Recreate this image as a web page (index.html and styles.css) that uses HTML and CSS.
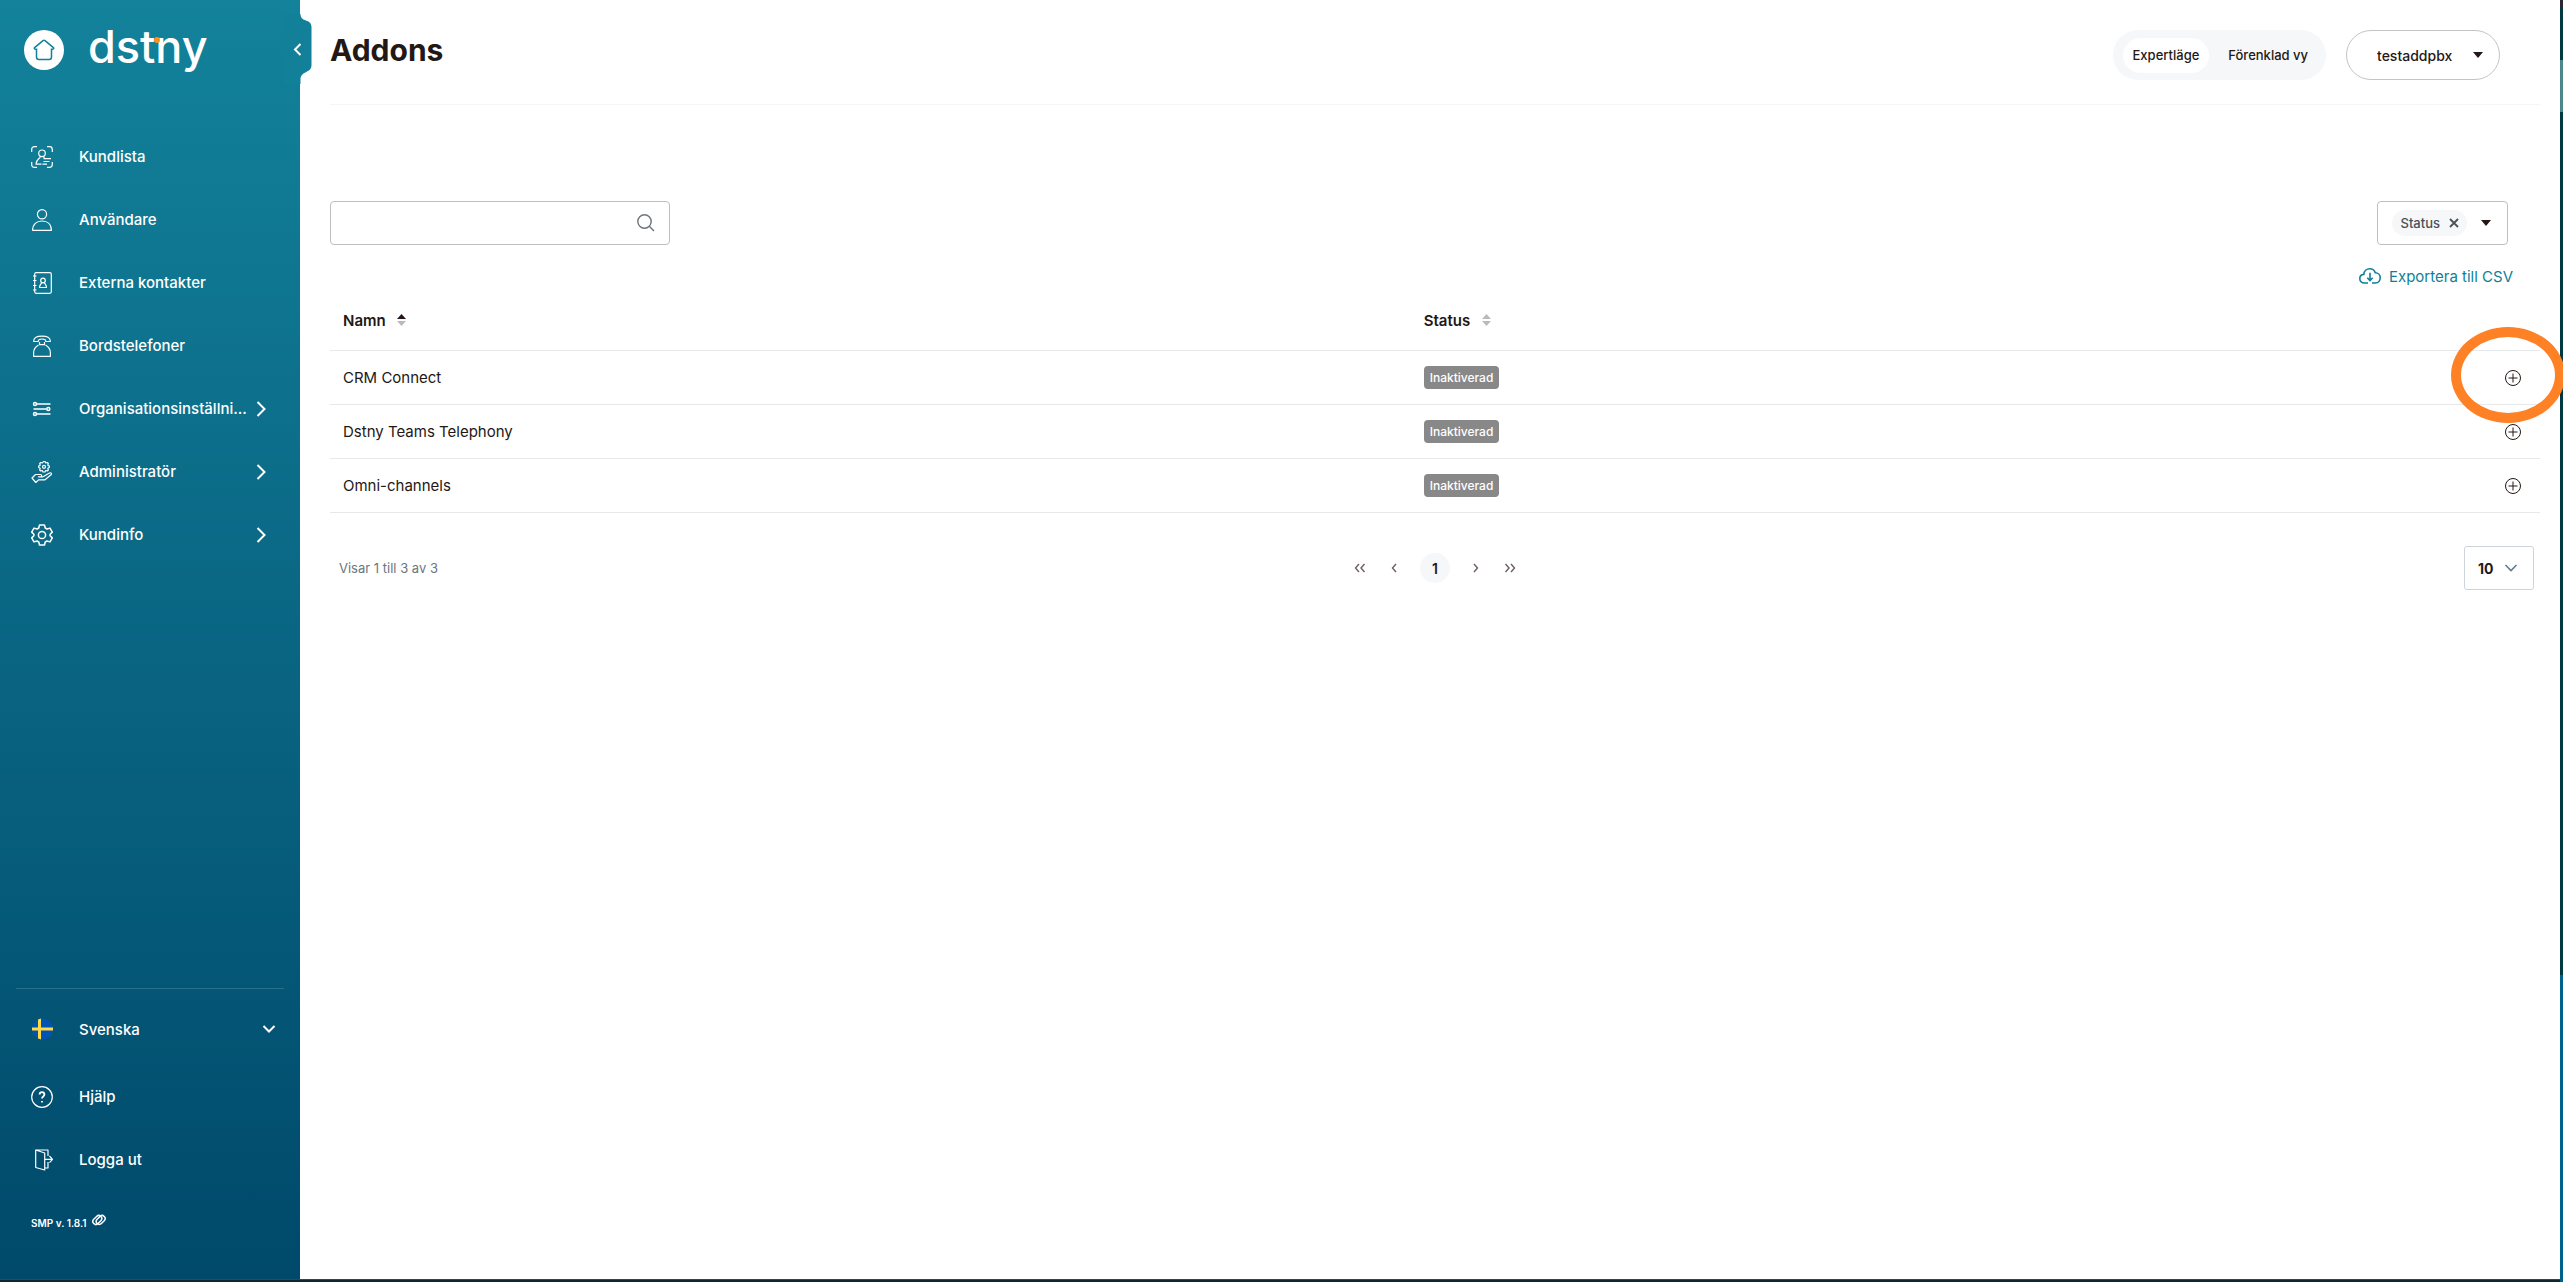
FILE: index.html
```html
<!DOCTYPE html>
<html lang="sv">

<head>
  <meta charset="UTF-8">
  <meta name="viewport" content="width=device-width, initial-scale=1.0">
  <title>Addons</title>
  <link rel="stylesheet" href="styles.css">
</head>

<body>
  <div class="app">
    <aside class="sidebar">
      <div class="brand">
        <a class="home" href="#" aria-label="Hem">
          <svg width="22" height="22" viewBox="0 0 22 22"><path d="M3.5 10.2H2.2c-.9 0-1.2-1-.6-1.6L10 1.600c.6-.5 1.400-.5 2 0l8.400 7c.6.6.3 1.600-.6 1.600h-1.300V18c0 1.500-.8 2.500-2.300 2.500H5.800C4.300 20.500 3.500 19.500 3.500 18z"/></svg>
        </a>
        <span class="logo">dstny</span>
      </div>
      <button class="collapse" aria-label="Dölj meny">
        <svg width="28" height="70" viewBox="0 0 28 70">
          <path class="tab" d="M0 0h16.500c0 9 11 4 11 13v38c0 9-11 5-11 15v4H0z"/>
          <path class="arrow" d="M16.500 30l-5.500 5.500 5.500 5.500"/>
        </svg>
      </button>

      <nav class="nav">
        <a class="nav-item" href="#">
          <svg class="icon" viewBox="0 0 22 22"><path d="M.7 6V3.500C.7 1.700 1.700.7 3.500.7H6M16 .7h2.500c1.800 0 2.800 1 2.800 2.800V6M21.300 16v2.500c0 1.800-1 2.800-2.800 2.800H16M6 21.300H3.500c-1.800 0-2.800-1-2.800-2.800V16"/><circle cx="11" cy="7.300" r="3.300"/><path d="M9.300 10.500c0 2-4.300 2.500-4.300 7.700h5.500M12.700 10.500c0 1 .5 1.500 1 1.700M12.500 12.700h7.500M12.500 15.500h6M11.500 18.200h4.500"/></svg>
          <span>Kundlista</span>
        </a>
        <a class="nav-item" href="#">
          <svg class="icon" viewBox="0 0 22 22"><circle cx="11" cy="5.300" r="4.600"/><path d="M1.600 21.300c0-6 4-9.300 9.400-9.300s9.400 3.300 9.400 9.300z"/></svg>
          <span>Användare</span>
        </a>
        <a class="nav-item" href="#">
          <svg class="icon" viewBox="0 0 22 22"><rect x="3.700" y=".7" width="16.600" height="20.600" rx="1.500"/><path d="M2 4h3.500M2 8.500h3.500M2 13.500h3.500M2 18h3.500"/><circle cx="12" cy="8.500" r="2.300"/><path d="M10.500 10.500c0 1.500-2 1.800-2 5h7c0-3.200-2-3.500-2-5"/></svg>
          <span>Externa kontakter</span>
        </a>
        <a class="nav-item" href="#">
          <svg class="icon" viewBox="0 0 22 22"><path d="M2.700 6.500C2.500 2.500 6 1.200 11 1.200s8.500 1.300 8.300 5.300h-4.500c0-1.500-.5-2.500-3.800-2.500s-3.800 1-3.800 2.500z"/><path d="M8.500 7v2.700h5V7M7.500 10C4 12 2.600 14.500 2.600 18v3.300h16.800V18c0-3.500-1.400-6-4.900-8"/></svg>
          <span>Bordstelefoner</span>
        </a>
        <a class="nav-item" href="#">
          <svg class="icon bold" viewBox="0 0 22 22"><circle cx="4" cy="6" r="1.500"/><path d="M6 6h13.500M2.500 11h12.800M6 16h13.500"/><circle cx="17.300" cy="11" r="1.500"/><circle cx="4" cy="16" r="1.500"/></svg>
          <span>Organisationsinställni...</span>
          <svg class="chevron" width="10" height="16" viewBox="0 0 10 16"><path d="M1.500 1l7 7-7 7"/></svg>
        </a>
        <a class="nav-item" href="#">
          <svg class="icon" viewBox="0 0 22 22"><path d="M12 1l1-.5h1l.7 1.500 1.600-.5 1 1-.5 1.700 1.500.8v1.500l-1.500.8.5 1.700-1 1-1.600-.5-.7 1.500h-2l-.7-1.500-1.600.5-1-1 .5-1.700L7.700 6.500V5l1.500-.8-.5-1.700 1-1 1.600.5z"/><circle cx="13" cy="5.800" r="1.500"/><path d="M1 17l3.500-3.500h5c1.500 0 1.500 2.300 0 2.300H7.500 12l6.500-3.800c1.500-.8 2.500.8 1.500 1.800l-6 5H7.500L4.800 21.500z"/></svg>
          <span>Administratör</span>
          <svg class="chevron" width="10" height="16" viewBox="0 0 10 16"><path d="M1.500 1l7 7-7 7"/></svg>
        </a>
        <a class="nav-item" href="#">
          <svg class="icon bold" viewBox="0 0 22 22"><path d="M8.500 1h5l.7 3 1.800 1 3-.9 2.300 4-2.200 2.200v1.400l2.200 2.200-2.300 4-3-.9-1.800 1-.7 3h-5l-.7-3-1.800-1-3 .9-2.300-4 2.200-2.200v-1.400L.7 8.100l2.300-4 3 .9 1.800-1z"/><circle cx="11" cy="11" r="3.600"/></svg>
          <span>Kundinfo</span>
          <svg class="chevron" width="10" height="16" viewBox="0 0 10 16"><path d="M1.500 1l7 7-7 7"/></svg>
        </a>
      </nav>

      <div class="nav-bottom">
        <label class="nav-item language">
          <svg class="icon flag" viewBox="0 0 22 22">
            <circle cx="11.500" cy="11" r="10.500" fill="#0052b4"/>
            <path fill="#ffda44" d="M7 1.500l3-.9v8.900h12v3H10v8.900l-3-.9v-8H1v-3h6z"/>
          </svg>
          <select aria-label="Språk">
            <option>Svenska</option>
          </select>
          <svg class="chevron" width="14" height="10" viewBox="0 0 14 10"><path d="M1.500 2L7 7.500 12.500 2"/></svg>
        </label>
        <a class="nav-item" href="#">
          <svg class="icon" viewBox="0 0 22 22"><circle cx="11" cy="11" r="10.300"/><path class="thick" d="M8.600 8.600c0-3.300 4.800-3.300 4.800 0 0 2-2.400 1.800-2.400 4M11 15v1.600"/></svg>
          <span>Hjälp</span>
        </a>
        <a class="nav-item" href="#">
          <svg class="icon" viewBox="0 0 22 22"><path d="M4.700 1H17v6M17 13v6h-3.500M4.700 1v17.500l9 2.500V4z M13.700 10.300H21M18.500 7l3 3.300-3 3.300"/></svg>
          <span>Logga ut</span>
        </a>
        <div class="version">
          <span>SMP v. 1.8.1</span>
          <svg width="16" height="12" viewBox="0 0 16 12"><rect x="1.300" y="3" width="10" height="6" rx="3" transform="rotate(-45 6.300 6)"/><rect x="4.700" y="3" width="10" height="6" rx="3" transform="rotate(-45 9.700 6)"/></svg>
        </div>
      </div>
    </aside>

    <main class="main">
      <header class="topbar">
        <h1>Addons</h1>
        <div class="view-toggle">
          <button class="active">Expertläge</button>
          <button>Förenklad vy</button>
        </div>
        <div class="account">
          <select aria-label="Konto">
            <option>testaddpbx</option>
          </select>
          <span class="caret"></span>
        </div>
      </header>

      <div class="toolbar">
        <div class="search">
          <input type="text" aria-label="Sök">
          <svg width="18" height="18" viewBox="0 0 18 18"><circle cx="7.500" cy="7.500" r="6.700"/><path d="M12.300 12.300l4.700 4.700"/></svg>
        </div>
        <div class="filter">
          <span class="chip">Status
            <button aria-label="Ta bort Status"><svg width="10" height="10" viewBox="0 0 10 10"><path d="M1 1l8 8M9 1L1 9"/></svg></button>
          </span>
          <button class="filter-open" aria-label="Välj filter"><span class="caret"></span></button>
        </div>
      </div>

      <div class="export">
        <a href="#">
          <svg width="22" height="16" viewBox="0 0 22 16"><path d="M9 15H5.500C2.500 15 .8 13 .8 10.600c0-2.300 1.700-4 4-4.200C5 3 7.500.8 10.800.8c2.700 0 4.700 1.500 5.500 4 3 0 4.900 2.300 4.900 5 0 3-2 5.200-4.700 5.200H13M11 4.800v7.700M8.300 9.800l2.700 2.900 2.700-2.900"/></svg>
          Exportera till CSV
        </a>
      </div>

      <table class="addons">
        <thead>
          <tr>
            <th class="col-name">Namn <svg class="sort asc" width="9" height="12" viewBox="0 0 9 12"><path class="up" d="M0 5l4.500-5L9 5z"/><path d="M0 7h9l-4.500 5z"/></svg></th>
            <th>Status <svg class="sort" width="9" height="12" viewBox="0 0 9 12"><path class="up" d="M0 5l4.500-5L9 5z"/><path d="M0 7h9l-4.500 5z"/></svg></th>
            <th class="col-action"></th>
          </tr>
        </thead>
        <tbody>
          <tr>
            <td>CRM Connect</td>
            <td><span class="badge">Inaktiverad</span></td>
            <td class="col-action">
              <button class="add marked" aria-label="Aktivera CRM Connect"><svg width="16" height="16" viewBox="0 0 16 16"><circle cx="8" cy="8" r="7.500"/><path d="M8 3.500v9M3.500 8h9"/></svg></button>
            </td>
          </tr>
          <tr>
            <td>Dstny Teams Telephony</td>
            <td><span class="badge">Inaktiverad</span></td>
            <td class="col-action">
              <button class="add" aria-label="Aktivera Dstny Teams Telephony"><svg width="16" height="16" viewBox="0 0 16 16"><circle cx="8" cy="8" r="7.500"/><path d="M8 3.500v9M3.500 8h9"/></svg></button>
            </td>
          </tr>
          <tr>
            <td>Omni-channels</td>
            <td><span class="badge">Inaktiverad</span></td>
            <td class="col-action">
              <button class="add" aria-label="Aktivera Omni-channels"><svg width="16" height="16" viewBox="0 0 16 16"><circle cx="8" cy="8" r="7.500"/><path d="M8 3.500v9M3.500 8h9"/></svg></button>
            </td>
          </tr>
        </tbody>
      </table>

      <div class="paginator">
        <span class="summary">Visar 1 till 3 av 3</span>
        <div class="pages">
          <button aria-label="Första sidan"><svg width="12" height="10" viewBox="0 0 12 10"><path d="M5 1L1.500 5 5 9M10.500 1L7 5l3.500 4"/></svg></button>
          <button aria-label="Föregående sida"><svg width="12" height="10" viewBox="0 0 12 10"><path d="M8 1L4.500 5 8 9"/></svg></button>
          <button class="current">1</button>
          <button aria-label="Nästa sida"><svg width="12" height="10" viewBox="0 0 12 10"><path d="M4 1l3.500 4L4 9"/></svg></button>
          <button aria-label="Sista sidan"><svg width="12" height="10" viewBox="0 0 12 10"><path d="M1.500 1L5 5 1.500 9M7 1l3.500 4L7 9"/></svg></button>
        </div>
        <div class="page-size">
          <select aria-label="Rader per sida">
            <option>10</option>
          </select>
          <svg width="14" height="9" viewBox="0 0 14 9"><path d="M1.500 1L7 6.500 12.500 1"/></svg>
        </div>
      </div>
    </main>
  </div>
</body>

</html>
```
FILE: styles.css
```css
*,
*::after {
  box-sizing: border-box;
}

body {
  margin: 0;
  overflow: hidden;
  font-family: Inter, sans-serif;
  font-size: 16px;
  color: #231815;
}

button,
input,
select {
  font: inherit;
  color: inherit;
  background: none;
  border: none;
  padding: 0;
  margin: 0;
  appearance: none;
}

button {
  cursor: pointer;
}

a {
  color: inherit;
  text-decoration: none;
}

svg {
  display: block;
  flex: none;
  fill: none;
  stroke: currentColor;
}

/* The window edges: 3px on the right and at the bottom */
.app {
  display: flex;
  min-height: 100vh;
  padding: 0 3px 3px 0;
  background:
    linear-gradient(#2b2838 8px, #003a40 8px 60px, #4a8789 60px 112px, #003a40 112px 975px, #00618a 975px) right / 3px 100% no-repeat,
    linear-gradient(#34464f 1px, #10272f 1px) bottom / 100% 3px no-repeat;
}

/* Sidebar */
.sidebar {
  position: relative;
  display: flex;
  flex-direction: column;
  flex: none;
  width: 300px;
  padding-bottom: 25px;
  color: #fff;
  font-size: 15px;
  font-weight: 500;
  background: linear-gradient(#13829b, #00496b);
}

.brand {
  display: flex;
  align-items: center;
  gap: 24px;
  height: 100px;
  padding-left: 24px;
  margin-bottom: 25px;
}

.home {
  display: flex;
  align-items: center;
  justify-content: center;
  width: 40px;
  height: 40px;
  border-radius: 50%;
  background: #fff;
  color: #13809a;
}

.home svg {
  stroke-width: 1.5;
}

.logo {
  position: relative;
  font-size: 45px;
  font-weight: 500;
  line-height: 54px;
  padding-bottom: 6px;
}

.logo::after {
  content: "";
  position: absolute;
  left: 66px;
  top: 17px;
  width: 6px;
  height: 6px;
  border-radius: 50%;
  background: #ff9016;
}

.collapse {
  position: absolute;
  left: 284px;
  top: 14px;
}

.tab {
  fill: #13809a;
  stroke: none;
}

.arrow {
  stroke-width: 2;
}

.nav-item {
  display: flex;
  align-items: center;
  height: 63px;
  padding: 0 34px 0 31px;
}

.icon {
  width: 22px;
  height: 22px;
  margin-right: 26px;
  stroke-width: 1.2;
  stroke-linejoin: round;
}

.icon.bold {
  stroke-width: 1.5;
}

.thick {
  stroke-width: 1.8;
}

.chevron {
  margin-left: auto;
  stroke-width: 2;
}

.flag {
  stroke: none;
}

.nav-bottom {
  margin: auto 16px 0;
  padding-top: 4px;
  border-top: 1px solid rgba(255, 255, 255, 0.15);
}

.nav-bottom .nav-item {
  padding: 0 8px 0 15px;
}

.nav-bottom .language {
  height: 72px;
}

.language select {
  flex: 1;
  font-weight: 500;
}

.version {
  display: flex;
  align-items: center;
  gap: 4px;
  height: 63px;
  padding-left: 15px;
  font-size: 10px;
  font-weight: 600;
}

.version svg {
  margin-bottom: 6px;
  stroke-width: 1.5;
}

/* Page */
.main {
  flex: 1;
  min-width: 0;
  padding: 0 20px 0 30px;
  background: #fff;
}

.topbar {
  display: flex;
  align-items: flex-start;
  height: 105px;
  padding: 30px 40px 0 0;
  border-bottom: 1px solid #f4f5f6;
}

h1 {
  flex: 1;
  margin: 0;
  font-size: 30px;
  font-weight: 700;
  line-height: 40px;
}

.view-toggle {
  display: flex;
  align-items: center;
  height: 50px;
  padding: 0 8px 0 10px;
  margin-right: 20px;
  border-radius: 25px;
  background: #f5f7f9;
  font-size: 13px;
  font-weight: 500;
}

.view-toggle button {
  height: 35px;
  padding: 0 10px;
  margin-right: 9px;
  border-radius: 18px;
}

.view-toggle button:last-child {
  margin-right: 0;
}

.view-toggle .active {
  background: #fff;
}

.caret {
  border: 5px solid transparent;
  border-top: 6px solid #231815;
  border-bottom: 0;
}

.account {
  display: flex;
  align-items: center;
  width: 154px;
  height: 50px;
  padding: 0 16px 0 30px;
  border: 1px solid #c4c4c4;
  border-radius: 25px;
  font-size: 14px;
  font-weight: 500;
}

.account select {
  flex: 1;
  min-width: 0;
}

.toolbar {
  display: flex;
  justify-content: space-between;
  padding: 96px 32px 0 0;
}

.search,
.filter {
  display: flex;
  align-items: center;
  height: 44px;
  border: 1px solid #bfbfbf;
  border-radius: 4px;
}

.search {
  width: 340px;
  padding: 0 14px;
  color: #6c757d;
}

.search input {
  flex: 1;
  height: 100%;
  outline: none;
}

.search svg {
  stroke-width: 1.4;
}

.filter {
  gap: 14px;
  padding: 0 16px 0 14px;
}

.chip {
  display: flex;
  align-items: center;
  gap: 9px;
  height: 26px;
  padding: 0 8px;
  border-radius: 13px;
  background: #f5f7f9;
  color: #495057;
  font-size: 13px;
  font-weight: 500;
}

.chip svg {
  stroke-width: 1.8;
}

.filter-open {
  display: flex;
}

.export {
  display: flex;
  justify-content: flex-end;
  padding: 19px 27px 3px 0;
  color: #0f7f99;
}

.export a {
  display: flex;
  align-items: center;
  gap: 8px;
  height: 24px;
  font-size: 15px;
}

.export svg {
  stroke-width: 1.6;
}

/* Table */
.addons {
  width: 100%;
  border-collapse: separate;
  border-spacing: 0;
  table-layout: fixed;
  font-size: 15px;
}

.addons th,
.addons td {
  height: 54px;
  padding: 0 13px;
  text-align: left;
  border-bottom: 1px solid #e6e8ea;
}

.addons th {
  height: 60px;
  font-weight: 600;
}

.addons .col-name {
  width: 48.9%;
}

.addons .col-action {
  width: 80px;
  padding: 0 19px;
}

.sort {
  display: inline-block;
  margin-left: 8px;
  fill: #bdb9b9;
  stroke: none;
}

.sort.asc .up {
  fill: #231815;
}

.badge {
  display: inline-block;
  padding: 0 6px;
  border-radius: 4px;
  background: #888;
  color: #fff;
  font-size: 12px;
  font-weight: 500;
  line-height: 23px;
}

.add {
  position: relative;
  display: block;
  margin-left: auto;
}

/* Orange ring round the first add button */
.marked::after {
  content: "";
  position: absolute;
  left: -54px;
  top: -43px;
  width: 114px;
  height: 96px;
  border: 10px solid #ff8126;
  border-radius: 50%;
  pointer-events: none;
}

/* Paginator */
.paginator {
  display: grid;
  grid-template-columns: 1fr auto 1fr;
  align-items: center;
  padding: 33px 6px 0;
}

.summary {
  padding-left: 3px;
  color: #6c757d;
  font-size: 13px;
}

.pages {
  display: flex;
  align-items: center;
  gap: 4px;
}

.pages button {
  display: flex;
  align-items: center;
  justify-content: center;
  width: 30px;
  height: 30px;
  color: #6b5f5f;
}

.pages svg {
  stroke-width: 1.4;
}

.pages .current {
  margin: 0 7px;
  border-radius: 50%;
  background: #f5f7f9;
  color: #231815;
  font-size: 14px;
  font-weight: 600;
}

.page-size {
  display: flex;
  align-items: center;
  justify-self: end;
  width: 70px;
  height: 44px;
  padding: 0 15px 0 13px;
  border: 1px solid #ced4da;
  border-radius: 3px;
  font-size: 14px;
  font-weight: 700;
}

.page-size select {
  flex: 1;
  min-width: 0;
}

.page-size svg {
  color: #5f7d90;
  stroke-width: 1.6;
}
```
